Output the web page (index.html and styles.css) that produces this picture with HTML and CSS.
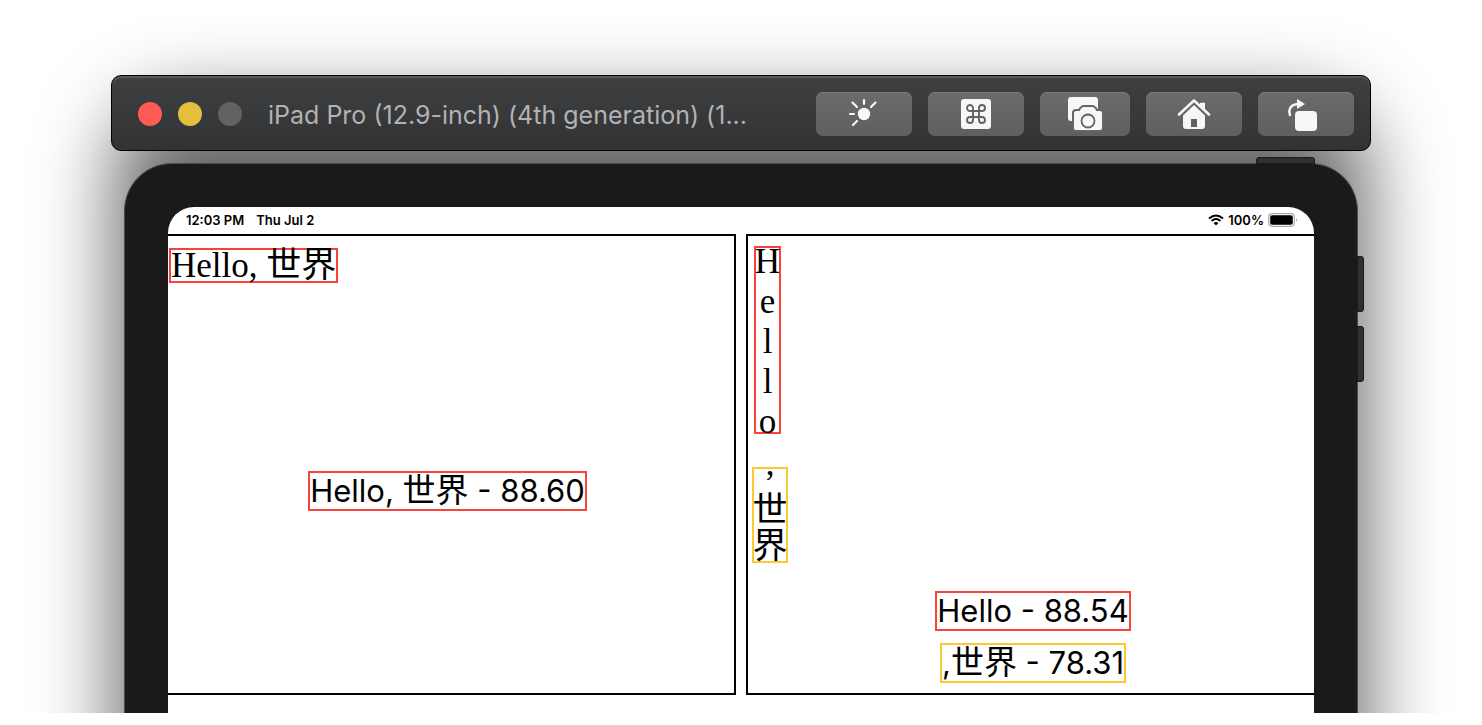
FILE: index.html
```html
<!DOCTYPE html>
<html lang="en">
<head>
<meta charset="utf-8">
<title>Simulator</title>
<link rel="stylesheet" href="styles.css">
</head>
<body>
<main class="desktop">
  <div class="shade"></div>
  <header class="titlebar">
    <div class="lights">
      <button class="light close" aria-label="Close"></button>
      <button class="light minimize" aria-label="Minimize"></button>
      <button class="light zoom" aria-label="Zoom" disabled></button>
    </div>
    <h1 class="title">iPad Pro (12.9-inch) (4th generation) (1...</h1>
    <nav class="tools">
      <button class="tool" aria-label="Appearance">
        <svg width="96" height="44" viewBox="0 0 96 44"><circle cx="48" cy="22" r="6.2" fill="#f7f7f9"/><path d="M48 8v4M36.500 10.500l4.500 4.500M59.500 10.500l-4.500 4.500M34 22h4M37 33l4-4" stroke="#f7f7f9" stroke-width="2.200" stroke-linecap="round"/></svg>
      </button>
      <button class="tool" aria-label="Keyboard">
        <svg width="96" height="44" viewBox="0 0 96 44"><rect x="33" y="7" width="30" height="30" rx="3" fill="#f7f7f9"/><path d="M45 19h6v6h-6zM45 19h-2.500a3 3 0 1 1 2.500-3zM51 19v-3a3 3 0 1 1 3 3zM51 25h3a3 3 0 1 1-3 3zM45 25v3a3 3 0 1 1-3-3z" fill="none" stroke="#626365" stroke-width="1.900"/></svg>
      </button>
      <button class="tool narrow" aria-label="Screenshot">
        <svg width="90" height="44" viewBox="0 0 90 44"><rect x="28" y="5" width="30" height="24" rx="3" fill="#f7f7f9"/><path d="M36 18h3q2-4 5-4h8q3 0 5 4h3a3 3 0 0 1 3 3v15a3 3 0 0 1-3 3H36a3 3 0 0 1-3-3V21a3 3 0 0 1 3-3z" fill="#f7f7f9" stroke="#656668" stroke-width="2"/><circle cx="48" cy="29" r="6.500" fill="none" stroke="#626365" stroke-width="1.800"/></svg>
      </button>
      <button class="tool" aria-label="Home">
        <svg width="96" height="44" viewBox="0 0 96 44"><path d="M37 23.500 48 13l11 10.500V34q0 3-3 3H40q-3 0-3-3z" fill="#f7f7f9"/><path d="M45 27h6v8h-6z" fill="#606163"/><path d="M33 22.500 48 8.500l15 14" fill="none" stroke="#656668" stroke-width="5.500" stroke-linejoin="round"/><path d="M54 10.700h5V19l-5-4z" fill="#f7f7f9"/><path d="M33 22.500 48 8.500l15 14" fill="none" stroke="#f7f7f9" stroke-width="2.600" stroke-linecap="round" stroke-linejoin="round"/></svg>
      </button>
      <button class="tool" aria-label="Rotate">
        <svg width="96" height="44" viewBox="0 0 96 44"><rect x="37" y="19" width="22" height="20" rx="4" fill="#f7f7f9"/><path d="M32 23c-2-6 1-11 9-11" fill="none" stroke="#f7f7f9" stroke-width="2.400" stroke-linecap="round"/><path d="M39 7l8 5-8 5z" fill="#f7f7f9"/></svg>
      </button>
    </nav>
  </header>
  <section class="device">
    <i class="key power"></i><i class="key volume-up"></i><i class="key volume-down"></i>
    <div class="screen">
      <div class="status">
        <span>12:03 PM</span><span>Thu Jul 2</span>
        <span class="battery">
          <svg width="16" height="14" viewBox="0 0 16 14"><path d="M1 5.500q7-6 14 0M3.500 8q4.500-4 9 0" fill="none" stroke="#000" stroke-width="2"/><path d="M5.500 10q2.500-2 5 0L8 12.500z"/></svg>
          <span>100%</span>
          <svg width="30" height="14" viewBox="0 0 30 14"><rect x=".7" y=".7" width="25.600" height="12.600" rx="3.500" fill="#fff" stroke="#aaa" stroke-width="1.200"/><rect x="2.200" y="2.200" width="22.600" height="9.600" rx="2"/><path d="M28 5q2 2 0 4z" fill="#aaa"/></svg>
        </span>
      </div>
      <div class="panes">
        <article class="pane left">
          <div class="mark serif line">Hello, 世界</div>
          <div class="mark result">Hello, <span class="han">世界</span> - 88.60</div>
        </article>
        <article class="pane right">
          <div class="column">
            <div class="mark serif letters"><span>H</span><span>e</span><span>l</span><span>l</span><span>o</span></div>
            <div class="mark serif glyphs yellow"><span class="comma">,</span><span>世</span><span>界</span></div>
          </div>
          <div class="results">
            <div class="mark result">Hello - 88.54</div>
            <div class="mark result yellow">,<span class="han">世界</span> - 78.31</div>
          </div>
        </article>
      </div>
    </div>
  </section>
</main>
</body>
</html>
```
FILE: styles.css
```css
* { box-sizing: border-box; }
body { margin: 0; background: #fff; color: #000; font-family: Inter, "Noto Sans CJK SC", sans-serif; }
button { border: 0; padding: 0; }
svg { display: block; }

.desktop {
  position: relative;
  height: calc(100vh - 12px);
  overflow: hidden;
  padding: 75px 111px 0;
  display: flex;
  flex-direction: column;
  gap: 12px;
}
.shade {
  position: absolute;
  inset: 104px 116px -200px;
  border-radius: 60px;
  background: rgba(0, 0, 0, .6);
  filter: blur(40px);
}
.titlebar {
  position: relative;
  flex: none;
  height: 76px;
  display: flex;
  align-items: center;
  padding: 2px 16px 0 26px;
  border: 1px solid #000;
  border-radius: 10px;
  background: linear-gradient(#3f4042, #313234);
  box-shadow: inset 0 2px #58595b;
}
.lights { display: flex; gap: 16px; }
.light { width: 24px; height: 24px; border-radius: 50%; }
.close { background: #ff5b56; }
.minimize { background: #e5bf3c; }
.zoom { background: #616263; }
.title { margin: 0 0 0 26px; padding-top: 2px; color: #b1b2b4; font-size: 25px; font-weight: 400; line-height: 32px; white-space: nowrap; }
.tools { margin-left: auto; display: flex; gap: 16px; }
.tool { width: 96px; height: 44px; border-radius: 7px; background: linear-gradient(#6a6b6d, #5e5f61); box-shadow: inset 0 1px #7a7b7d; }
.narrow { width: 90px; }

.device {
  position: relative;
  flex: 1;
  margin: 0 13px;
  padding: 43px 43px 0;
  border: 1px solid #4b4b4b;
  border-bottom: 0;
  border-radius: 48px 48px 0 0;
  background: #1a1a1a;
}
.key { position: absolute; background: #303030; border: 1px solid #1a1a1a; }
.power { top: -7px; right: 42px; width: 59px; height: 7px; border-radius: 3px 3px 0 0; }
.volume-up, .volume-down { right: -7px; width: 7px; height: 56px; border-radius: 0 3px 3px 0; }
.volume-up { top: 92px; }
.volume-down { top: 162px; }

.screen { height: 100%; overflow: hidden; background: #fff; border-radius: 26px 26px 0 0; }
.status { height: 27px; display: flex; align-items: center; gap: 12px; padding: 0 16px 2px 18px; font-size: 13px; font-weight: 600; }
.battery { margin-left: auto; display: flex; align-items: center; gap: 4px; }
.panes { display: grid; grid-template-columns: 1fr 1fr; gap: 10px; height: 461px; }
.pane { border: 2px solid #000; display: flex; flex-direction: column; }
.left { border-left: 0; align-items: flex-start; justify-content: space-between; padding: 12px 8px 182px 1px; }
.left .result { align-self: center; }
.right { border-right: 0; justify-content: space-between; padding: 10px 0 10px 4px; }
.mark { border: 2px solid #f9423a; white-space: nowrap; }
.yellow { border-color: #fdc92f; }
.serif { font-family: "Liberation Serif", "Noto Sans CJK SC", serif; font-size: 35px; }
.line { height: 35px; line-height: 32px; }
.result { height: 40px; font-size: 31px; line-height: 36px; }
.han { font-size: 33px; line-height: 32px; }
.column { display: flex; flex-direction: column; align-items: flex-start; gap: 33px; }
.letters { width: 27px; height: 188px; margin-left: 2px; }
.letters span { display: flex; justify-content: center; height: 40px; line-height: 28px; }
.glyphs { width: 36px; height: 96px; }
.glyphs span { display: flex; justify-content: center; height: 36px; line-height: 36px; }
.glyphs .comma { height: 40px; margin-top: -16px; line-height: 22px; }
.results { display: flex; flex-direction: column; align-items: center; gap: 12px; }
```
